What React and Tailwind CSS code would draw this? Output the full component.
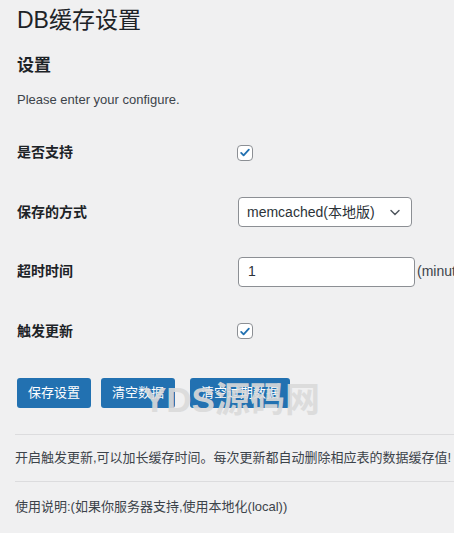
import React from "react";

const font = {
  fontFamily: '"Liberation Sans", "Noto Sans CJK SC", sans-serif',
};

function Checkbox() {
  return (
    <span className="inline-flex h-4 w-4 items-center justify-center rounded-[4px] border border-[#8c8f94] bg-white">
      <svg viewBox="0 0 20 20" className="h-[15px] w-[15px]">
        <path
          d="M4.5 10.5l3.5 3.5 7.5-8"
          fill="none"
          stroke="#2271b1"
          strokeWidth="2.6"
          strokeLinecap="round"
          strokeLinejoin="round"
        />
      </svg>
    </span>
  );
}

function Row({ label, children }) {
  return (
    <div className="flex h-[59.5px] items-center">
      <div className="w-[220px] shrink-0 text-[14px] font-semibold text-[#1d2327]">
        {label}
      </div>
      <div className="flex items-center">{children}</div>
    </div>
  );
}

export default function App() {
  return (
    <div
      className="relative h-[533px] w-[454px] overflow-hidden bg-[#f0f0f1] text-[#3c434a]"
      style={font}
    >
      <div className="w-[700px] pl-[17px]">
        <h1 className="pt-[4px] text-[23px] leading-[32px] font-normal text-[#1d2327]">
          DB缓存设置
        </h1>
        <h2 className="mt-[18px] text-[17px] leading-[24px] font-semibold text-[#1d2327]">
          设置
        </h2>
        <p className="mt-[12px] text-[13px] leading-[20px]">
          Please enter your configure.
        </p>

        <div className="mt-[13px]">
          <Row label="是否支持">
            <Checkbox />
          </Row>
          <Row label="保存的方式">
            <div className="ml-[1px] flex h-[30px] w-[174px] items-center justify-between rounded-[4px] border border-[#8c8f94] bg-white pr-[8px] pl-[8px] text-[14px] text-[#2c3338]">
              <span>memcached(本地版)</span>
              <svg viewBox="0 0 20 20" className="h-[16px] w-[16px]">
                <path
                  d="M5 8l5 5 5-5"
                  fill="none"
                  stroke="#50575e"
                  strokeWidth="1.8"
                  strokeLinecap="round"
                />
              </svg>
            </div>
          </Row>
          <Row label="超时时间">
            <div className="ml-[1px] flex h-[30px] w-[177px] items-center rounded-[4px] border border-[#8c8f94] bg-white pl-[9px] text-[14px] text-[#2c3338]">
              1
            </div>
            <span className="ml-[2px] text-[14px]">(minutes)</span>
          </Row>
          <Row label="触发更新">
            <Checkbox />
          </Row>
        </div>

        <div className="mt-[17px] flex items-center text-[13px] text-white">
          <button className="h-[30px] rounded-[3px] bg-[#2271b1] px-[11px]">
            保存设置
          </button>
          <button className="ml-[10px] h-[30px] rounded-[3px] bg-[#2271b1] px-[11px]">
            清空数据
          </button>
          <button className="ml-[15px] h-[30px] rounded-[3px] bg-[#2271b1] px-[11px]">
            清空过期数据
          </button>
        </div>

        <div className="-ml-[2px] mt-[26px] border-t border-[#dcdcde]" />
        <p className="-ml-[2px] mt-[13px] text-[13px] leading-[20px]">
          开启触发更新,可以加长缓存时间。每次更新都自动删除相应表的数据缓存值!
        </p>
        <div className="-ml-[2px] mt-[13px] border-t border-[#dcdcde]" />
        <p className="-ml-[2px] mt-[15px] text-[13px] leading-[20px]">
          使用说明:(如果你服务器支持,使用本地化(local))
        </p>
      </div>

      <div
        className="pointer-events-none absolute top-[380px] left-[143px] text-[35px] leading-[40px] font-bold text-[#dadada] opacity-90"
        style={{ fontFamily: '"Liberation Sans", "Noto Sans CJK SC", sans-serif' }}
      >
        YDS源码网
      </div>
    </div>
  );
}
